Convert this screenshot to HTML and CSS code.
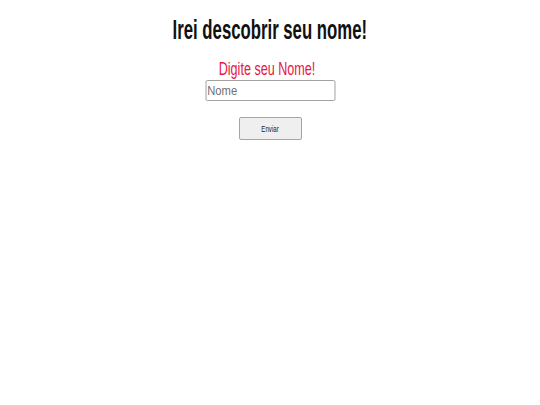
FILE: index.html
```html
<!DOCTYPE html>
<html lang="pt">
<head>
<meta charset="utf-8">
<title>Irei descobrir seu nome!</title>
<link rel="stylesheet" href="styles.css">
</head>
<body>
<main class="page">
  <h1 class="title"><span class="narrow">Irei descobrir seu nome!</span></h1>
  <form class="form">
    <label class="label" for="nome"><span class="narrow">Digite seu Nome!</span></label>
    <input class="field" id="nome" type="text" placeholder="Nome">
    <button class="btn" type="button"><span class="btn-text">Enviar</span></button>
  </form>
</main>
</body>
</html>
```
FILE: styles.css
```css
html, body {
  margin: 0;
  background: #ffffff;
}
.page {
  display: flex;
  flex-direction: column;
  align-items: center;
  padding-top: 15px;
  font-family: "Liberation Sans", Arial, sans-serif;
}
.title {
  margin: 0;
  font-size: 27px;
  line-height: 30px;
  font-weight: bold;
  color: #111;
  text-align: center;
  white-space: nowrap;
}
.narrow {
  display: inline-block;
  transform: scaleX(0.62);
}
.form {
  display: flex;
  flex-direction: column;
  align-items: center;
  margin-top: 14px;
}
.label {
  font-size: 18px;
  line-height: 20px;
  color: #e3173f;
  white-space: nowrap;
  margin-right: 5px;
}
.label .narrow {
  transform: scaleX(0.7);
}
.field {
  box-sizing: border-box;
  width: 151px;
  height: 21px;
  margin: 1px 0 0;
  padding: 0 1px;
  border: 1px solid #9a9a9a;
  border-radius: 2px;
  font-family: "Liberation Sans", Arial, sans-serif;
  font-size: 13px;
  color: #222;
  background: #fff;
  transform: scaleX(0.86);
  outline: none;
}
.field::placeholder {
  color: #6f6f6f;
}
.btn {
  box-sizing: border-box;
  width: 63px;
  height: 23px;
  margin-top: 16px;
  padding: 0;
  border: 1px solid #a5a5a5;
  border-radius: 2px;
  background: #efefef;
  font-family: "Liberation Sans", Arial, sans-serif;
  font-size: 8.5px;
  color: #1a1a1a;
}
.btn-text {
  display: inline-block;
  transform: scaleX(0.72);
}
```
